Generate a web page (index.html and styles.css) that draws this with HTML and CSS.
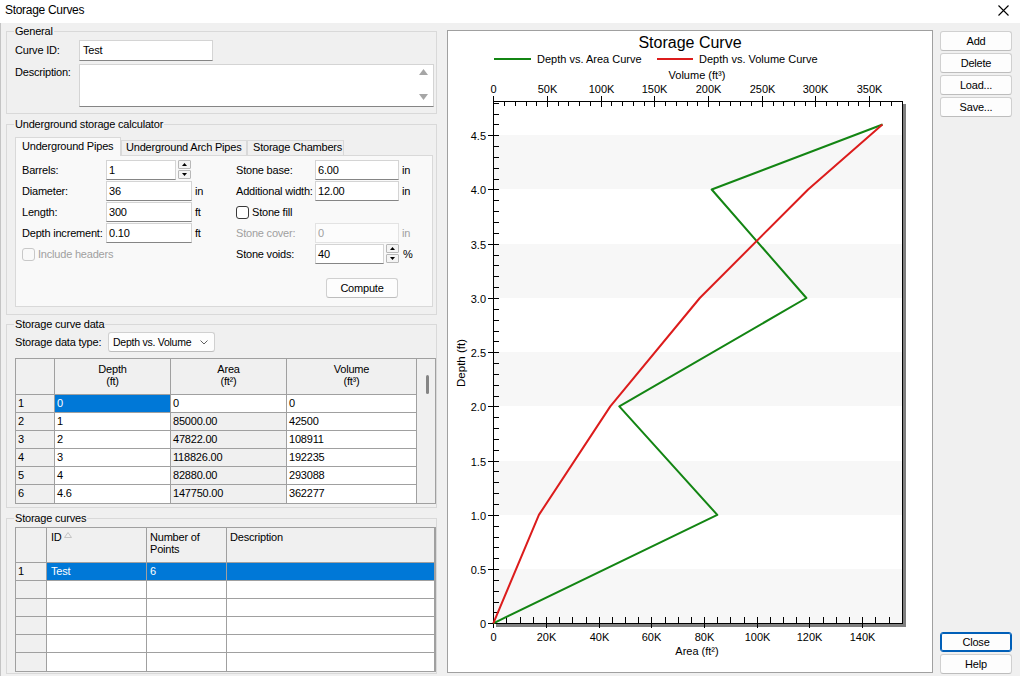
FILE: index.html
```html
<!DOCTYPE html>
<html lang="en">
<head>
<meta charset="utf-8">
<title>Storage Curves</title>
<link rel="stylesheet" href="styles.css">
</head>
<body>
<div class="window">
  <div class="titlebar">
    <span class="title">Storage Curves</span>
    <svg class="close-x" width="11" height="11" viewBox="0 0 11 11"><path d="M0.5 0.5L10.5 10.5M10.5 0.5L0.5 10.5" stroke="#000" stroke-width="1.1" fill="none"/></svg>
  </div>
  <div class="main">
    <div class="left">
      <div class="group g-general">
        <span class="gtitle">General</span>
        <div class="frow r-id">
          <span class="lbl l-gen">Curve ID:</span>
          <div class="edit e-id">Test</div>
        </div>
        <div class="frow r-desc">
          <span class="lbl l-gen l-desc">Description:</span>
          <div class="memo">
            <div class="memo-sb">
              <svg width="9" height="6" viewBox="0 0 9 6"><path d="M4.5 0L9 6H0Z" fill="#a6a6a6"/></svg>
              <svg width="9" height="6" viewBox="0 0 9 6"><path d="M0 0H9L4.5 6Z" fill="#a6a6a6"/></svg>
            </div>
          </div>
        </div>
      </div>

      <div class="group g-calc">
        <span class="gtitle">Underground storage calculator</span>
        <div class="tabs">
          <div class="tab sel">Underground Pipes</div>
          <div class="tab t2">Underground Arch Pipes</div>
          <div class="tab t3">Storage Chambers</div>
        </div>
        <div class="tabpanel">
          <div class="pcol pcol-l">
            <span class="lbl">Barrels:</span>
            <div class="spinwrap">
              <div class="edit e-barrels">1</div>
              <div class="spin">
                <div class="sbtn"><svg width="5" height="3" viewBox="0 0 5 3"><path d="M2.5 0L5 3H0Z"/></svg></div>
                <div class="sbtn"><svg width="5" height="3" viewBox="0 0 5 3"><path d="M0 0H5L2.5 3Z"/></svg></div>
              </div>
            </div>
            <span></span>
            <span class="lbl">Diameter:</span><div class="edit">36</div><span class="unit">in</span>
            <span class="lbl">Length:</span><div class="edit">300</div><span class="unit">ft</span>
            <span class="lbl">Depth increment:</span><div class="edit">0.10</div><span class="unit">ft</span>
            <div class="check dis span3"><span class="box"></span><span>Include headers</span></div>
          </div>
          <div class="pcol pcol-r">
            <span class="lbl">Stone base:</span><div class="edit">6.00</div><span class="unit">in</span>
            <span class="lbl">Additional width:</span><div class="edit">12.00</div><span class="unit">in</span>
            <div class="check span3"><span class="box"></span><span>Stone fill</span></div>
            <span class="lbl dis-t">Stone cover:</span><div class="edit dis">0</div><span class="unit dis-t">in</span>
            <span class="lbl">Stone voids:</span>
            <div class="spinwrap">
              <div class="edit e-voids">40</div>
              <div class="spin">
                <div class="sbtn"><svg width="5" height="3" viewBox="0 0 5 3"><path d="M2.5 0L5 3H0Z"/></svg></div>
                <div class="sbtn"><svg width="5" height="3" viewBox="0 0 5 3"><path d="M0 0H5L2.5 3Z"/></svg></div>
              </div>
            </div>
            <span class="unit u-pct">%</span>
            <div class="btn compute">Compute</div>
          </div>
        </div>
      </div>

      <div class="group g-data">
        <span class="gtitle">Storage curve data</span>
        <div class="r-type">
          <span class="lbl l-type">Storage data type:</span>
          <div class="combo">
            <span class="combo-t">Depth vs. Volume</span>
            <svg class="chev" width="8" height="5" viewBox="0 0 8 5"><path d="M0.5 0.5L4 4L7.5 0.5" stroke="#606060" fill="none"/></svg>
          </div>
        </div>
        <div class="table t-data">
          <div class="dgrid">
            <div class="c h"></div>
            <div class="c h hc"><span>Depth</span><span>(ft)</span></div>
            <div class="c h hc"><span>Area</span><span>(ft²)</span></div>
            <div class="c h hc"><span>Volume</span><span>(ft³)</span></div>

            <div class="c rh">1</div><div class="c selc">0</div><div class="c">0</div><div class="c">0</div>
            <div class="c rh">2</div><div class="c">1</div><div class="c ro">85000.00</div><div class="c">42500</div>
            <div class="c rh">3</div><div class="c">2</div><div class="c ro">47822.00</div><div class="c">108911</div>
            <div class="c rh">4</div><div class="c">3</div><div class="c ro">118826.00</div><div class="c">192235</div>
            <div class="c rh">5</div><div class="c">4</div><div class="c ro">82880.00</div><div class="c">293088</div>
            <div class="c rh nb">6</div><div class="c nb">4.6</div><div class="c ro nb">147750.00</div><div class="c nb">362277</div>
          </div>
          <div class="vscroll"><div class="thumb"></div></div>
        </div>
      </div>

      <div class="group g-curves">
        <span class="gtitle">Storage curves</span>
        <div class="table t-curves">
          <div class="cgrid">
            <div class="c h"></div>
            <div class="c h hl hl-id"><span>ID</span><svg class="sort" width="8" height="6" viewBox="0 0 8 6"><path d="M0.5 5.5L4 0.5L7.5 5.5Z" fill="none" stroke="#c4c4c4"/></svg></div>
            <div class="c h hl"><span>Number of</span><span>Points</span></div>
            <div class="c h hl">Description</div>

            <div class="c rh">1</div><div class="c selc p4">Test</div><div class="c selc p3">6</div><div class="c selc"></div>
            <div class="c rh"></div><div class="c"></div><div class="c"></div><div class="c"></div>
            <div class="c rh"></div><div class="c"></div><div class="c"></div><div class="c"></div>
            <div class="c rh"></div><div class="c"></div><div class="c"></div><div class="c"></div>
            <div class="c rh"></div><div class="c"></div><div class="c"></div><div class="c"></div>
            <div class="c rh nb"></div><div class="c nb"></div><div class="c nb"></div><div class="c nb"></div>
          </div>
        </div>
      </div>
    </div>

    <div class="chart">
      <svg width="484" height="641" viewBox="448 31 484 641" shape-rendering="crispEdges">
        <g fill="#f7f7f7">
          <rect x="494" y="569" width="408" height="54"/>
          <rect x="494" y="461" width="408" height="54"/>
          <rect x="494" y="352" width="408" height="54"/>
          <rect x="494" y="244" width="408" height="54"/>
          <rect x="494" y="135" width="408" height="54"/>
        </g>
        <g fill="#7f7f7f">
          <rect x="903" y="104" width="3" height="523"/>
          <rect x="496" y="624" width="410" height="3"/>
        </g>
        <rect x="493.5" y="101.5" width="409" height="522" fill="none" stroke="#000"/>
        <g stroke="#000" fill="none">
          <path d="M493 612.5H499M493 602.5H499M493 591.5H499M493 580.5H499M493 558.5H499M493 547.5H499M493 537.5H499M493 526.5H499M493 504.5H499M493 493.5H499M493 482.5H499M493 471.5H499M493 450.5H499M493 439.5H499M493 428.5H499M493 417.5H499M493 396.5H499M493 385.5H499M493 374.5H499M493 363.5H499M493 341.5H499M493 331.5H499M493 320.5H499M493 309.5H499M493 287.5H499M493 276.5H499M493 265.5H499M493 255.5H499M493 233.5H499M493 222.5H499M493 211.5H499M493 200.5H499M493 179.5H499M493 168.5H499M493 157.5H499M493 146.5H499M493 124.5H499M493 114.5H499M493 103.5H499"/>
          <path d="M488 623.5H499M488 569.5H499M488 515.5H499M488 461.5H499M488 406.5H499M488 352.5H499M488 298.5H499M488 244.5H499M488 189.5H499M488 135.5H499"/>
          <path d="M506.5 617V623M520.5 617V623M533.5 617V623M559.5 617V623M572.5 617V623M586.5 617V623M612.5 617V623M625.5 617V623M638.5 617V623M665.5 617V623M678.5 617V623M691.5 617V623M717.5 617V623M730.5 617V623M744.5 617V623M770.5 617V623M783.5 617V623M796.5 617V623M823.5 617V623M836.5 617V623M849.5 617V623M875.5 617V623M889.5 617V623"/>
          <path d="M493.5 617V628M546.5 617V628M599.5 617V628M651.5 617V628M704.5 617V628M757.5 617V628M809.5 617V628M862.5 617V628"/>
          <path d="M504.5 101V106M515.5 101V106M526.5 101V106M536.5 101V106M558.5 101V106M568.5 101V106M579.5 101V106M590.5 101V106M611.5 101V106M622.5 101V106M633.5 101V106M644.5 101V106M665.5 101V106M676.5 101V106M687.5 101V106M697.5 101V106M719.5 101V106M730.5 101V106M740.5 101V106M751.5 101V106M773.5 101V106M783.5 101V106M794.5 101V106M805.5 101V106M826.5 101V106M837.5 101V106M848.5 101V106M858.5 101V106M880.5 101V106M891.5 101V106"/>
          <path d="M493.5 96V107M547.5 96V107M601.5 96V107M654.5 96V107M708.5 96V107M762.5 96V107M815.5 96V107M869.5 96V107"/>
        </g>
        <g shape-rendering="auto" fill="none" stroke-width="2" stroke-linejoin="round">
          <polyline points="493.3,623.3 717.3,514.9 619.3,406.4 806.4,298 711.7,189.5 882.6,124.5" stroke="#138513"/>
          <polyline points="493.3,623.3 538.9,514.9 610.3,406.4 699.8,298 808.1,189.5 882.4,124.5" stroke="#dc1c1c"/>
          <line x1="494" y1="59" x2="531" y2="59" stroke="#138513"/>
          <line x1="657" y1="59" x2="693" y2="59" stroke="#dc1c1c"/>
        </g>
        <g class="ctext" shape-rendering="auto">
          <text x="690" y="47.5" text-anchor="middle" class="ctitle">Storage Curve</text>
          <text x="537" y="63">Depth vs. Area Curve</text>
          <text x="699" y="63">Depth vs. Volume Curve</text>
          <text x="697" y="79" text-anchor="middle">Volume (ft³)</text>
          <g text-anchor="middle">
            <text x="493.5" y="93">0</text>
            <text x="547.5" y="93">50K</text>
            <text x="601.5" y="93">100K</text>
            <text x="654.5" y="93">150K</text>
            <text x="708.5" y="93">200K</text>
            <text x="762.5" y="93">250K</text>
            <text x="815.5" y="93">300K</text>
            <text x="869.5" y="93">350K</text>
            <text x="493.5" y="641">0</text>
            <text x="546.5" y="641">20K</text>
            <text x="599.5" y="641">40K</text>
            <text x="651.5" y="641">60K</text>
            <text x="704.5" y="641">80K</text>
            <text x="757.5" y="641">100K</text>
            <text x="809.5" y="641">120K</text>
            <text x="862.5" y="641">140K</text>
            <text x="697" y="655">Area (ft²)</text>
          </g>
          <g text-anchor="end">
            <text x="486" y="627.5">0</text>
            <text x="486" y="573.5">0.5</text>
            <text x="486" y="519.5">1.0</text>
            <text x="486" y="465.5">1.5</text>
            <text x="486" y="410.5">2.0</text>
            <text x="486" y="356.5">2.5</text>
            <text x="486" y="302.5">3.0</text>
            <text x="486" y="248.5">3.5</text>
            <text x="486" y="193.5">4.0</text>
            <text x="486" y="139.5">4.5</text>
          </g>
          <text class="ylabel" transform="translate(465 363) rotate(-90)" text-anchor="middle">Depth (ft)</text>
        </g>
      </svg>
    </div>

    <div class="btns">
      <div class="btn">Add</div>
      <div class="btn">Delete</div>
      <div class="btn">Load...</div>
      <div class="btn">Save...</div>
      <div class="btn close">Close</div>
      <div class="btn">Help</div>
    </div>
  </div>
</div>
</body>
</html>
```

FILE: styles.css
```css
* { box-sizing: border-box; }
html, body { margin: 0; padding: 0; }
body { width: 1020px; height: 676px; overflow: hidden; background: #f0f0f0; }

.window {
  width: 1020px;
  height: 676px;
  background: #f0f0f0;
  font-family: "Liberation Sans", Arial, sans-serif;
  font-size: 11px;
  letter-spacing: -0.2px;
  color: #000;
  box-shadow: inset 1px 0 0 #c4c4c4;
}

.titlebar {
  height: 23px;
  background: #fff;
  display: flex;
  align-items: center;
  justify-content: space-between;
  padding: 0 11px 3px 5px;
}
.title { font-size: 12px; line-height: 14px; letter-spacing: -0.3px; }
.close-x { display: block; }

.main { display: flex; height: 653px; }

.left {
  width: 431px;
  margin-left: 6px;
  display: flex;
  flex-direction: column;
  flex: none;
}

.group { border: 1px solid #d9d9d9; flex: none; }
.gtitle {
  display: block;
  width: max-content;
  margin: -7px 0 0 7px;
  padding: 0 1px;
  background: #f0f0f0;
  line-height: 13px;
  height: 13px;
  white-space: nowrap;
}

.g-general { margin-top: 8px; height: 83px; }
.g-calc { margin-top: 10px; height: 191px; }
.g-data { margin-top: 9px; height: 184px; }
.g-curves { margin-top: 10px; height: 156px; }

.frow { display: flex; padding-left: 8px; }
.lbl { white-space: nowrap; line-height: 13px; }
.l-gen { width: 64px; flex: none; }
.r-id { margin-top: 2px; align-items: center; }
.r-desc { margin-top: 3px; align-items: flex-start; }
.l-desc { padding-top: 2px; }

.edit {
  background: #fff;
  border: 1px solid #d4d4d4;
  border-bottom-color: #858585;
  height: 20px;
  line-height: 18px;
  padding: 0 2px;
  white-space: nowrap;
  overflow: hidden;
}
.e-id { width: 134px; height: 21px; line-height: 19px; padding-left: 3px; }

.memo {
  width: 355px;
  height: 43px;
  background: #fff;
  border: 1px solid #d4d4d4;
  border-bottom-color: #858585;
  display: flex;
  justify-content: flex-end;
}
.memo-sb {
  width: 19px;
  display: flex;
  flex-direction: column;
  justify-content: space-between;
  align-items: center;
  padding: 4px 0 6px;
}
.memo-sb svg { display: block; }

/* tabs */
.tabs {
  display: flex;
  align-items: flex-end;
  margin: 6px 0 -1px 8px;
  height: 19px;
  position: relative;
  z-index: 1;
}
.tab {
  border: 1px solid #d9d9d9;
  border-bottom: none;
  white-space: nowrap;
  line-height: 13px;
}
.tab.sel { height: 19px; width: 106px; background: #f9f9f9; padding: 2px 0 0 6px; }
.tab.t2 { height: 15px; width: 126px; background: #f0f0f0; padding: 0 0 0 4px; margin-bottom: 1px; }
.tab.t3 { height: 15px; width: 97px; background: #f0f0f0; padding: 0 0 0 5px; margin-bottom: 1px; }

.tabpanel {
  margin-left: 8px;
  width: 418px;
  height: 152px;
  border: 1px solid #d9d9d9;
  background: #f9f9f9;
  padding: 4px 0 0 6px;
  display: grid;
  grid-template-columns: 214px 1fr;
  align-items: start;
}
.pcol {
  display: grid;
  grid-auto-rows: 20px;
  row-gap: 1px;
  align-items: center;
}
.pcol-l { grid-template-columns: 84px 86px auto; }
.pcol-r { grid-template-columns: 79px 84px auto; grid-template-rows: repeat(5, 20px) 33px; }
.unit { padding-left: 3px; line-height: 13px; }
.u-pct { padding-left: 4px; }

.spinwrap { display: flex; gap: 2px; height: 20px; }
.e-barrels { width: 70px; }
.e-voids { width: 69px; }
.spin {
  width: 13px;
  height: 19px;
  display: flex;
  flex-direction: column;
  justify-content: space-between;
}
.sbtn {
  height: 9px;
  border: 1px solid #b8b8b8;
  background: #f4f4f4;
  border-radius: 1px;
  display: flex;
  align-items: center;
  justify-content: center;
}
.sbtn svg { display: block; fill: #000; }

.span3 { grid-column: 1 / -1; }
.check { display: flex; align-items: center; gap: 3px; line-height: 13px; }
.box {
  width: 13px;
  height: 13px;
  border: 1px solid #3a3a3a;
  border-radius: 3px;
  background: #fff;
  flex: none;
}
.check.dis { color: #a0a0a0; }
.check.dis .box { border-color: #c8c8c8; background: #f9f9f9; }
.dis-t { color: #a0a0a0; }
.edit.dis { background: #fcfcfc; border-color: #e3e3e3; color: #a0a0a0; }

.btn {
  height: 20px;
  border: 1px solid #d0d0d0;
  border-bottom-color: #bdbdbd;
  border-radius: 3px;
  background: #fdfdfd;
  text-align: center;
  line-height: 18px;
  white-space: nowrap;
}
.compute {
  grid-column: 1 / 3;
  justify-self: end;
  align-self: end;
  width: 72px;
  margin-right: 1px;
}

/* storage curve data */
.r-type { margin: 1px 0 0 8px; display: flex; align-items: center; height: 20px; }
.l-type { width: 93px; flex: none; }
.combo {
  width: 107px;
  height: 20px;
  border: 1px solid #d0d0d0;
  border-bottom-color: #bdbdbd;
  border-radius: 3px;
  background: #fdfdfd;
  display: flex;
  align-items: center;
  padding-left: 4px;
}
.combo-t {
  width: 83px;
  overflow: hidden;
  white-space: nowrap;
  line-height: 13px;
  font-size: 10.5px;
  letter-spacing: -0.25px;
}
.chev { display: block; margin-left: 4px; }

.table {
  border: 1px solid #a0a0a0;
  display: flex;
  width: 421px;
  background: #fff;
}
.t-data { margin: 6px 0 0 8px; }
.t-curves { margin: 2px 0 0 8px; }

.dgrid {
  display: grid;
  grid-template-columns: 39px 116px 116px 130px;
  grid-template-rows: 36px repeat(6, 18px);
}
.cgrid {
  display: grid;
  grid-template-columns: 31px 100px 80px 208px;
  grid-template-rows: 35px repeat(6, 18px);
}
.c {
  border-right: 1px solid #a0a0a0;
  border-bottom: 1px solid #a0a0a0;
  padding-left: 2px;
  line-height: 17px;
  white-space: nowrap;
  overflow: hidden;
}
.h { background: #f0f0f0; }
.hc {
  display: flex;
  flex-direction: column;
  align-items: center;
  justify-content: center;
  line-height: 12px;
  padding: 0 0 4px;
}
.hl {
  display: flex;
  flex-direction: column;
  line-height: 12px;
  padding: 3px 0 0 3px;
}
.hl-id { flex-direction: row; align-items: flex-start; padding-left: 4px; }
.sort { display: block; margin: 1px 0 0 2px; }
.rh { background: #f0f0f0; }
.ro { background: #f0f0f0; }
.selc { background: #0078d7; color: #fff; }
.p4 { padding-left: 4px; }
.p3 { padding-left: 3px; }
.nb { border-bottom: none; }

.vscroll { width: 18px; background: #f0f0f0; }
.thumb {
  width: 3px;
  height: 19px;
  background: #858585;
  border-radius: 2px;
  margin: 16px 0 0 9px;
}

/* chart */
.chart {
  margin: 7px 0 0 10px;
  width: 486px;
  height: 643px;
  border: 1px solid #a0a0a0;
  background: #fff;
  flex: none;
  letter-spacing: 0;
}
.chart svg { display: block; }
.ctext text { font-family: "Liberation Sans", Arial, sans-serif; font-size: 11px; fill: #000; letter-spacing: 0; }
.ctext .ctitle { font-size: 16px; }
.ctext .ylabel { font-size: 11.5px; }

/* right buttons */
.btns {
  margin: 8px 0 0 7px;
  width: 72px;
  height: 643px;
  display: flex;
  flex-direction: column;
  gap: 2px;
  flex: none;
}
.close {
  margin-top: auto;
  border-color: #005fb8;
  box-shadow: inset 0 0 0 1px #005fb8;
}
```
